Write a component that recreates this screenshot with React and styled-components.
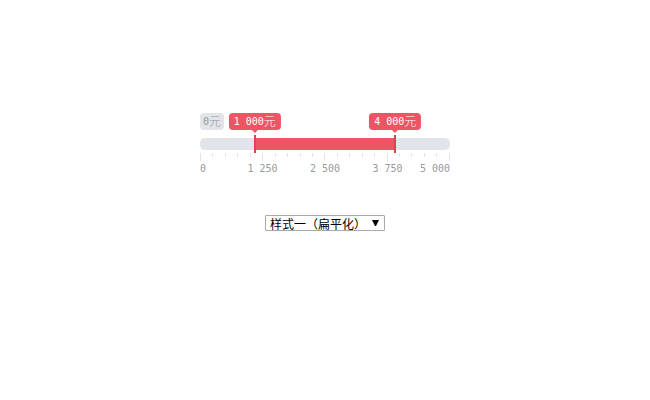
import React, { useState } from "react"
import styled, { createGlobalStyle } from "styled-components"

const MIN = 0
const MAX = 5000
const MARKS = [0, 1250, 2500, 3750, 5000]

const GlobalStyle = createGlobalStyle`
  body {
    margin: 0;
    background: #fff;
    font-family: "DejaVu Sans Mono", "Noto Sans CJK SC", monospace;
    font-size: 10px;
  }
`

const Page = styled.main`
  display: flex;
  flex-direction: column;
  align-items: center;
  gap: 38px;
  padding: 113px 16px 16px;
`

const Slider = styled.div`
  width: 100%;
  max-width: 250px;
`

const Tips = styled.div`
  position: relative;
  display: flex;
  justify-content: space-between;
  height: 17px;
  margin-bottom: 5px;
`

const Limit = styled.span`
  padding: 0 3px;
  border-radius: 4px;
  background: #e1e4e9;
  color: #999;
  line-height: 17px;
  white-space: nowrap;
  visibility: ${({ $hidden }) => ($hidden ? "hidden" : "visible")};
`

const Tip = styled.output`
  position: absolute;
  top: 0;
  padding: 0 5px;
  border-radius: 4px;
  background: #ed5565;
  color: #fff;
  line-height: 17px;
  white-space: nowrap;
  transform: translateX(-50%);
  &::after {
    content: "";
    position: absolute;
    top: 100%;
    left: 50%;
    margin-left: -3px;
    border: 3px solid transparent;
    border-top-color: #ed5565;
    border-bottom-width: 0;
  }
`

const Unit = styled.span`
  font-family: "Noto Sans CJK SC", sans-serif;
  font-size: 12px;
  font-weight: 300;
  line-height: 16px;
  vertical-align: top;
`

const Track = styled.div`
  display: grid;
  align-items: center;
  height: 18px;
  > * {
    grid-area: 1 / 1;
  }
`

const Rail = styled.div`
  height: 12px;
  border-radius: 5px;
  background: #e1e4e9;
`

const Fill = styled.div`
  height: 12px;
  background: #ed5565;
`

// The thumb is 16px wide for grabbing, only its middle 2px are painted
const Range = styled.input`
  appearance: none;
  width: 100%;
  height: 18px;
  margin: 0;
  background: transparent;
  pointer-events: none;
  &::-webkit-slider-thumb {
    appearance: none;
    width: 16px;
    height: 18px;
    background: linear-gradient(#da4453, #da4453) center / 2px 18px no-repeat;
    cursor: pointer;
    pointer-events: auto;
  }
  &::-moz-range-thumb {
    width: 16px;
    height: 18px;
    border: 0;
    border-radius: 0;
    background: linear-gradient(#da4453, #da4453) center / 2px 18px no-repeat;
    cursor: pointer;
    pointer-events: auto;
  }
`

const Ticks = styled.div`
  display: flex;
  justify-content: space-between;
  height: 8px;
`

const Tick = styled.span`
  width: 1px;
  height: ${({ $major }) => ($major ? "8px" : "4px")};
  background: #e1e4e9;
`

const Marks = styled.div`
  display: grid;
  grid-template-columns: 1fr 2fr 2fr 2fr 1fr;
  color: #999;
  line-height: 16px;
  text-align: center;
  white-space: nowrap;
  > :first-child {
    text-align: left;
  }
  > :last-child {
    text-align: right;
  }
`

const SelectBox = styled.div`
  display: grid;
  align-items: center;
  width: 120px;
  > * {
    grid-area: 1 / 1;
  }
`

const Select = styled.select`
  appearance: none;
  width: 100%;
  height: 16px;
  padding: 1px 4px 0;
  border: 1px solid #a9a9a9;
  border-radius: 1px;
  background: #fff;
  color: #000;
  font-family: "Noto Sans CJK SC", sans-serif;
  font-size: 12px;
  line-height: 14px;
`

const Arrow = styled.svg`
  justify-self: end;
  margin-right: 6px;
  pointer-events: none;
`

const format = n => String(n).replace(/\B(?=(\d{3})+$)/g, " ")

const ratio = n => (n - MIN) / (MAX - MIN)

const thumbLeft = n => `calc(8px + (100% - 16px) * ${ratio(n)})`

const App = () => {
  const [from, setFrom] = useState(1000)
  const [to, setTo] = useState(4000)

  return (
    <>
      <GlobalStyle />
      <Page>
        <Slider>
          <Tips>
            <Limit $hidden={from < 900}>
              {format(MIN)}
              <Unit>元</Unit>
            </Limit>
            <Limit $hidden={to > 3600}>
              {format(MAX)}
              <Unit>元</Unit>
            </Limit>
            <Tip htmlFor="from" style={{ left: thumbLeft(from) }}>
              {format(from)}
              <Unit>元</Unit>
            </Tip>
            <Tip htmlFor="to" style={{ left: thumbLeft(to) }}>
              {format(to)}
              <Unit>元</Unit>
            </Tip>
          </Tips>
          <Track>
            <Rail />
            <Fill
              style={{
                marginLeft: thumbLeft(from),
                width: `calc((100% - 16px) * ${ratio(to) - ratio(from)})`,
              }}
            />
            <Range
              id="from"
              type="range"
              aria-label="from"
              min={MIN}
              max={MAX}
              step={10}
              value={from}
              onChange={e => setFrom(Math.min(Number(e.target.value), to))}
            />
            <Range
              id="to"
              type="range"
              aria-label="to"
              min={MIN}
              max={MAX}
              step={10}
              value={to}
              onChange={e => setTo(Math.max(Number(e.target.value), from))}
            />
          </Track>
          <Ticks>
            {[...Array(21)].map((_, i) => (
              <Tick key={i} $major={i % 5 === 0} />
            ))}
          </Ticks>
          <Marks>
            {MARKS.map(mark => (
              <span key={mark}>{format(mark)}</span>
            ))}
          </Marks>
        </Slider>
        <SelectBox>
          <Select aria-label="样式">
            <option>样式一（扁平化）</option>
          </Select>
          <Arrow width="7" height="6" viewBox="0 0 7 6" aria-hidden="true">
            <path d="M0 0h7L4 6H3z" fill="#000" />
          </Arrow>
        </SelectBox>
      </Page>
    </>
  )
}

export default App
